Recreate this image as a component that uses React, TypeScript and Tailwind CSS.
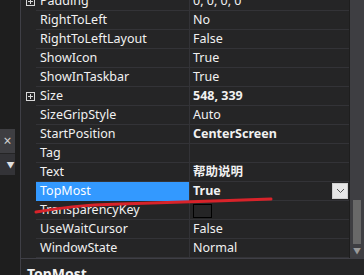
import React from 'react';

type Prop = { name: string; value: string; bold?: boolean; expand?: boolean; swatch?: boolean };

const props: Prop[] = [
  { name: 'Padding', value: '0, 0, 0, 0', expand: true },
  { name: 'RightToLeft', value: 'No' },
  { name: 'RightToLeftLayout', value: 'False' },
  { name: 'ShowIcon', value: 'True' },
  { name: 'ShowInTaskbar', value: 'True' },
  { name: 'Size', value: '548, 339', bold: true, expand: true },
  { name: 'SizeGripStyle', value: 'Auto' },
  { name: 'StartPosition', value: 'CenterScreen', bold: true },
  { name: 'Tag', value: '' },
  { name: 'Text', value: '帮助说明', bold: true },
  { name: 'TopMost', value: 'True', bold: true },
  { name: 'TransparencyKey', value: '', swatch: true },
  { name: 'UseWaitCursor', value: 'False' },
  { name: 'WindowState', value: 'Normal' },
];

function PlusBox() {
  return (
    <svg width="9" height="9" viewBox="0 0 9 9" className="block">
      <rect x="0.5" y="0.5" width="8" height="8" fill="none" stroke="#d8d8d8" />
      <path d="M2 4.5h5M4.5 2v5" stroke="#d8d8d8" />
    </svg>
  );
}

function Row({ p }: { p: Prop }) {
  const selected = p.name === 'TopMost';
  return (
    <div className="flex h-[19px]">
      <div className="w-[15px] flex items-center justify-center pl-[3px]">
        {p.expand && <PlusBox />}
      </div>
      <div
        className={
          selected
            ? 'w-[153px] flex items-center pl-[4px] pt-[1px] bg-[#3399ff] text-white border-b border-[#3399ff]'
            : 'w-[153px] flex items-center pl-[4px] pt-[1px] border-b border-[#333337] text-[#f1f1f1]'
        }
      >
        {p.name}
      </div>
      <div className="flex-1 flex items-center pl-[3px] pt-[1px] border-l border-b border-[#333337] text-[#f1f1f1] relative">
        {p.swatch ? (
          <div className="w-[19px] h-[14px] border border-black" />
        ) : (
          <span className={p.bold ? 'font-bold' : ''}>{p.value}</span>
        )}
        {selected && (
          <div className="absolute right-[1px] top-[1px] w-[16px] h-[16px] bg-[#e6e6e6] border border-[#cfcfcf] flex items-center justify-center">
            <svg width="9" height="6" viewBox="0 0 9 6">
              <path d="M1 1l3.5 3.5L8 1" fill="none" stroke="#555" strokeWidth="1" />
            </svg>
          </div>
        )}
      </div>
    </div>
  );
}

export default function App() {
  return (
    <div
      className="w-[364px] h-[275px] bg-[#252526] flex overflow-hidden relative text-[12.5px] leading-none"
      style={{ fontFamily: '"Noto Sans", "Noto Sans CJK SC", sans-serif' }}
    >
      {/* left tool window edge */}
      <div className="w-[21px] border-r border-[#3f3f46] bg-[#1e1e1e] flex flex-col">
        <div className="h-[129px]" />
        <div className="w-[15px] h-[24px] bg-[#3e3e42] flex items-center justify-center text-[#d0d0d0] text-[14px]">
          ×
        </div>
        <div className="w-[15px] h-[22px] bg-[#333337] border-t border-[#252526] flex items-center justify-center text-[#e0e0e0] text-[8px] pl-[6px]">
          ▼
        </div>
      </div>

      <div className="flex-1 flex flex-col">
        <div className="flex h-[258px]">
          <div className="flex-1 flex flex-col -mt-[8px] overflow-hidden border-r border-[#1e1e1e]">
            {props.map((p) => (
              <Row key={p.name} p={p} />
            ))}
          </div>
          <div className="w-[14px] bg-[#3e3e42] flex flex-col">
            <div className="h-[200px]" />
            <div className="mx-[3px] h-[44px] bg-[#686868]" />
            <div className="flex justify-center text-[#999999] text-[8px] pt-[3px]">▼</div>
          </div>
        </div>
        <div className="flex-1 border-t border-[#3f3f46] pl-[6px] pt-[8px] text-[#f1f1f1] font-bold text-[14px]">
          TopMost
        </div>
      </div>

      {/* red annotation stroke */}
      <svg className="absolute left-0 top-0 pointer-events-none" width="364" height="275">
        <path
          d="M36 212 C 60 208, 80 205, 120 204 S 220 201, 271 199"
          fill="none"
          stroke="#d8232a"
          strokeWidth="3"
          strokeLinecap="round"
        />
      </svg>
    </div>
  );
}
